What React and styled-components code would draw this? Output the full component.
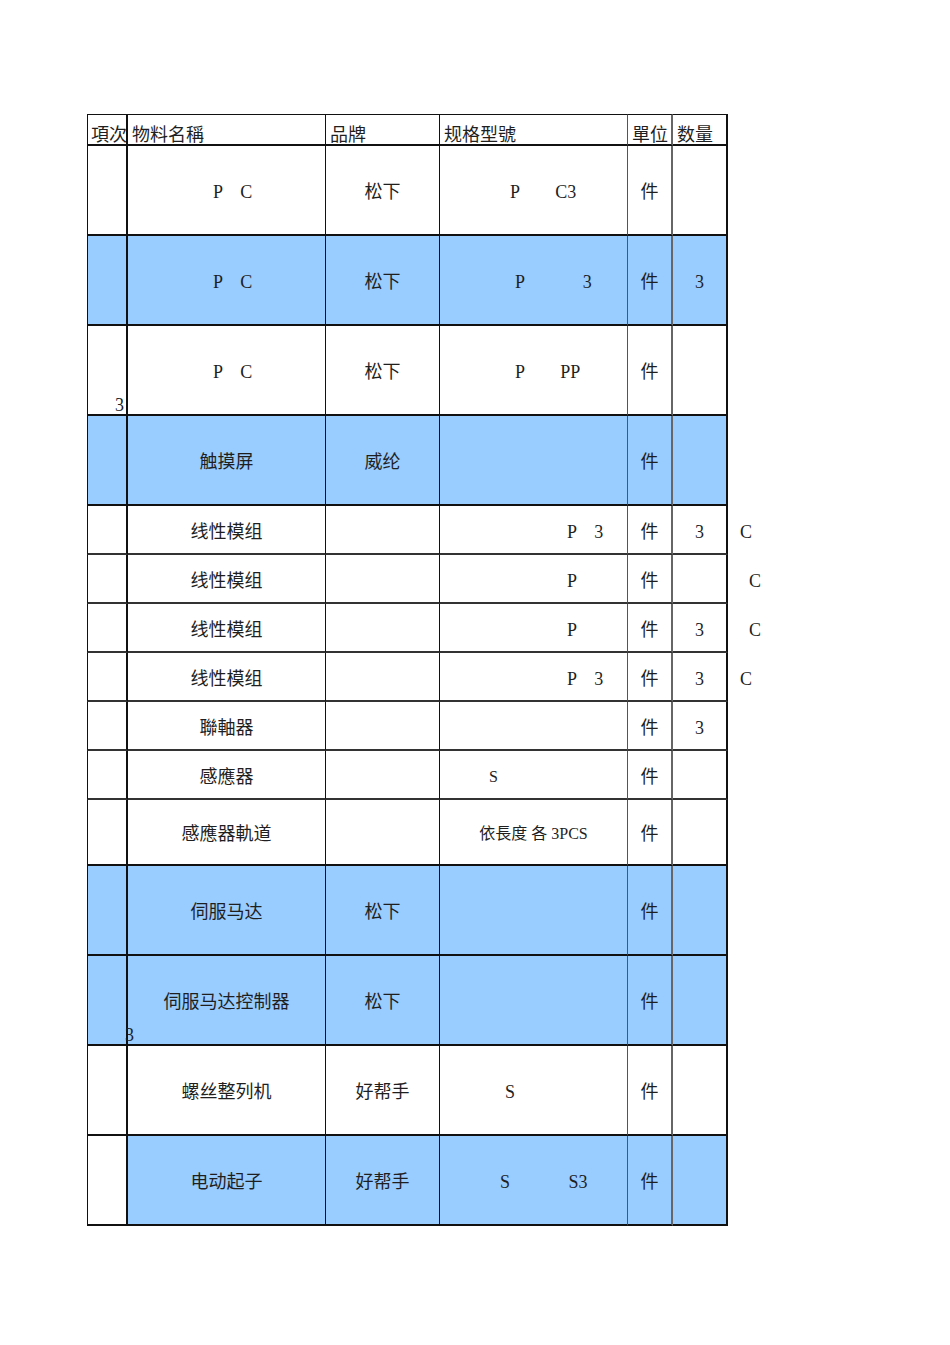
import React from "react";
import styled, { createGlobalStyle } from "styled-components";

const GlobalStyle = createGlobalStyle`
  html, body {
    margin: 0;
    padding: 0;
    background: #ffffff;
  }
  body {
    font-family: "Liberation Serif", "Noto Sans CJK SC", serif;
    color: #1f1f1f;
  }
`;

const BLUE = "#99ccff";
const COLS = "41px 198px 114px 188px 45px 55px 60px";
// right border of each column, left to right
const EDGES = [
  "2px solid #111",
  "1px solid #111",
  "1px solid #111",
  "1px solid #555",
  "2px solid #666",
  "2px solid #111",
];

const Page = styled.div`
  width: 950px;
  min-height: 1345px;
  box-sizing: border-box;
  padding: 114px 0 0 87px;
`;

const Sheet = styled.div`
  display: inline-block;
`;

const Row = styled.div`
  display: grid;
  grid-template-columns: ${COLS};
  height: ${(p) => p.$h}px;
`;

const Cell = styled.div`
  box-sizing: border-box;
  display: flex;
  align-items: ${(p) => (p.$bottom ? "flex-end" : "center")};
  justify-content: ${(p) =>
    p.$align === "left" ? "flex-start" : p.$align === "right" ? "flex-end" : "center"};
  padding-left: ${(p) => (p.$align === "left" ? p.$inset || 0 : 0)}px;
  padding-right: ${(p) => (p.$align === "right" ? p.$inset || 0 : 0)}px;
  padding-top: ${(p) => (p.$bottom ? 0 : 4)}px;
  border-right: ${(p) => p.$edge};
  border-bottom: 2px solid ${(p) => p.$line};
  border-left: ${(p) => (p.$first ? "1px solid #111" : "none")};
  border-top: ${(p) => (p.$top ? "1px solid #111" : "none")};
  background: ${(p) => (p.$fill ? BLUE : "#ffffff")};
  font-size: ${(p) => (p.$small ? 16 : 18)}px;
  line-height: 1;
  white-space: pre;
  overflow: visible;
`;

const Outside = styled.div`
  display: flex;
  align-items: center;
  padding-top: 4px;
  padding-left: ${(p) => p.$inset}px;
  font-size: 18px;
  white-space: pre;
`;

const Overhang = styled.span`
  position: relative;
  z-index: 1;
  margin-right: -8px;
`;

const header = ["項次", "物料名稱", "品牌", "规格型號", "單位", "数量"];

const L = (t, inset, small) => ({ t, align: "left", inset, small });

const rows = [
  { h: 90, fill: "none", cells: ["", L("P    C", 85), "松下", L("P        C3", 70), "件", ""] },
  { h: 90, fill: "all", cells: ["", L("P    C", 85), "松下", L("P             3", 75), "件", "3"] },
  {
    h: 90,
    fill: "none",
    cells: [{ t: "3", align: "right", inset: 2, bottom: true }, L("P    C", 85), "松下", L("P        PP", 75), "件", ""],
  },
  { h: 90, fill: "all", cells: ["", "触摸屏", "威纶", "", "件", ""] },
  { h: 49, fill: "none", thin: true, cells: ["", "线性模组", "", L("P    3", 127), "件", "3"], extra: { t: "C", inset: 12 } },
  { h: 49, fill: "none", thin: true, cells: ["", "线性模组", "", L("P", 127), "件", ""], extra: { t: "C", inset: 21 } },
  { h: 49, fill: "none", thin: true, cells: ["", "线性模组", "", L("P", 127), "件", "3"], extra: { t: "C", inset: 21 } },
  { h: 49, fill: "none", thin: true, cells: ["", "线性模组", "", L("P    3", 127), "件", "3"], extra: { t: "C", inset: 12 } },
  { h: 49, fill: "none", thin: true, cells: ["", "聯軸器", "", "", "件", "3"] },
  { h: 49, fill: "none", thin: true, cells: ["", "感應器", "", L("S", 49, true), "件", ""] },
  { h: 66, fill: "none", cells: ["", "感應器軌道", "", { t: "依長度 各 3PCS", small: true }, "件", ""] },
  { h: 90, fill: "all", cells: ["", "伺服马达", "松下", "", "件", ""] },
  { h: 90, fill: "all", cells: [{ t: "3", align: "right", bottom: true, over: true }, "伺服马达控制器", "松下", "", "件", ""] },
  { h: 90, fill: "none", cells: ["", "螺丝整列机", "好帮手", L("S", 65), "件", ""] },
  { h: 90, fill: "tail", cells: ["", "电动起子", "好帮手", L("S             S3", 60), "件", ""] },
];

const norm = (c) => (typeof c === "string" ? { t: c } : c);

const App = () => (
  <Page>
    <GlobalStyle />
    <Sheet>
      <Row $h={32}>
        {header.map((t, i) => (
          <Cell
            key={t}
            $edge={EDGES[i]}
            $line="#111"
            $align="left"
            $inset={i === 0 ? 3 : 4}
            $bottom
            $first={i === 0}
            $top
          >
            {t}
          </Cell>
        ))}
      </Row>
      {rows.map((r, ri) => (
        <Row key={ri} $h={r.h}>
          {r.cells.map((raw, i) => {
            const c = norm(raw);
            const fill = r.fill === "all" || (r.fill === "tail" && i > 0);
            return (
              <Cell
                key={i}
                $edge={EDGES[i]}
                $line={r.thin ? "#333" : "#111"}
                $fill={fill}
                $align={c.align}
                $inset={c.inset}
                $bottom={c.bottom}
                $small={c.small}
                $first={i === 0}
              >
                {c.over ? <Overhang>{c.t}</Overhang> : c.t}
              </Cell>
            );
          })}
          {r.extra ? <Outside $inset={r.extra.inset}>{r.extra.t}</Outside> : <div />}
        </Row>
      ))}
    </Sheet>
  </Page>
);

export default App;
